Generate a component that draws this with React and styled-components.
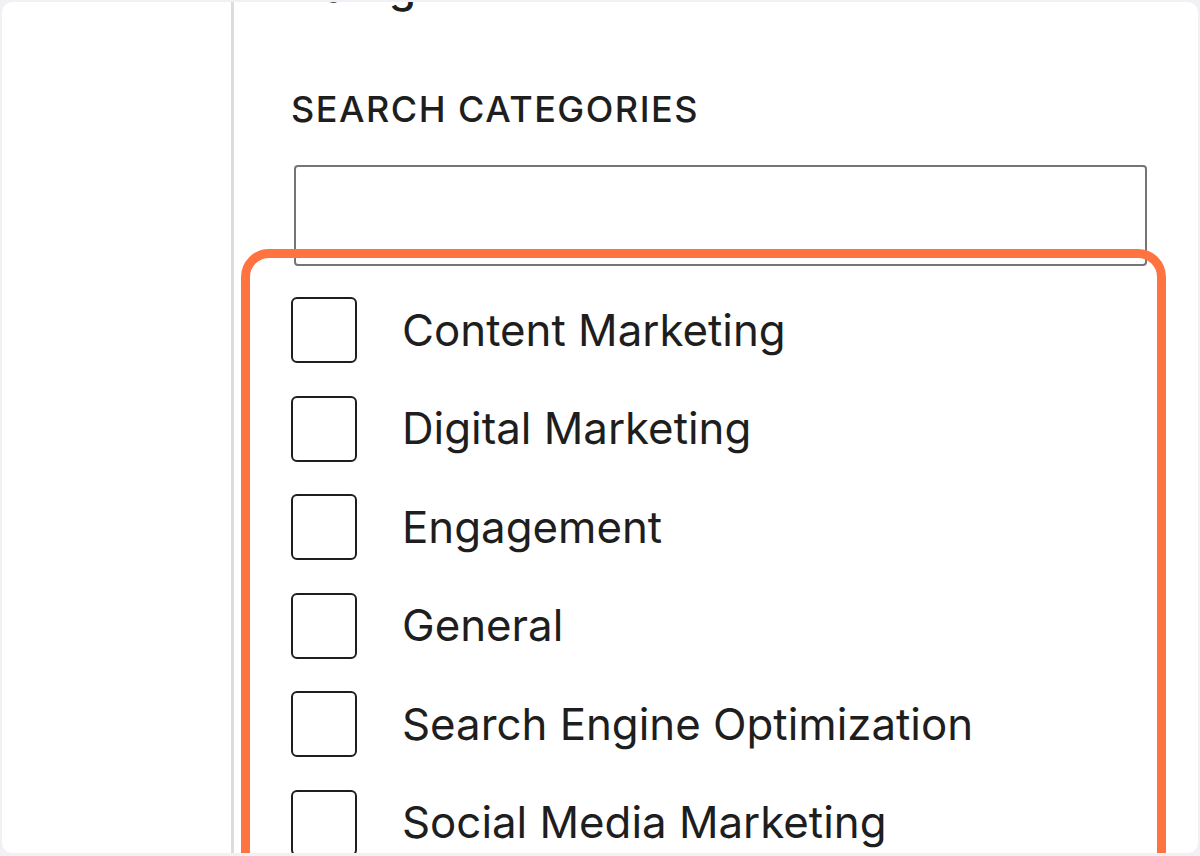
import React from "react";
import styled, { createGlobalStyle } from "styled-components";

const Global = createGlobalStyle`
  html, body { margin: 0; padding: 0; background: #f1f1f5; }
  body { font-family: Inter, "Noto Sans", sans-serif; color: #1e1e1e; }
  * { box-sizing: border-box; }
`;

const Card = styled.div`
  position: relative;
  margin: 2px;
  width: 1196px;
  height: 851px;
  background: #ffffff;
  border-radius: 10px;
  overflow: hidden;
  display: grid;
  grid-template-columns: 229px 3px 1fr;
`;

const Sidebar = styled.div``;

const Divider = styled.div`
  background: #dcdcde;
`;

const Main = styled.div`
  display: flex;
  flex-direction: column;
  padding-left: 57px;
  padding-right: 51px;
`;

const Heading = styled.h2`
  margin: -38px 0 0 0;
  font-size: 44px;
  line-height: 44px;
  font-weight: 500;
  color: #1e1e1e;
`;

const Label = styled.div`
  margin-top: 79px;
  font-size: 36px;
  line-height: 44px;
  font-weight: 500;
  letter-spacing: 1.5px;
  text-transform: uppercase;
  color: #1e1e1e;
`;

const SearchInput = styled.input`
  margin-top: 34px;
  margin-left: 3px;
  height: 101px;
  border: 2px solid #757575;
  border-radius: 4px;
  background: #fff;
  font-size: 40px;
  padding: 0 16px;
  outline: none;
`;

const List = styled.ul`
  list-style: none;
  margin: 31px 0 0 0;
  padding: 0;
  display: flex;
  flex-direction: column;
  gap: 32.6px;
`;

const Row = styled.li`
  display: flex;
  align-items: center;
  height: 66px;
  gap: 45px;
`;

const Box = styled.span`
  flex: none;
  width: 66px;
  height: 66px;
  border: 2px solid #1e1e1e;
  border-radius: 6px;
  background: #fff;
`;

const RowText = styled.span`
  font-size: 43.8px;
  font-weight: 400;
  color: #1e1e1e;
  white-space: nowrap;
`;

const Highlight = styled.div`
  position: absolute;
  left: 239px;
  top: 247px;
  width: 925px;
  height: 700px;
  border: 9px solid #ff7340;
  border-radius: 28px;
  pointer-events: none;
`;

const categories = [
  "Content Marketing",
  "Digital Marketing",
  "Engagement",
  "General",
  "Search Engine Optimization",
  "Social Media Marketing",
];

export default function App() {
  return (
    <>
      <Global />
      <Card>
        <Sidebar />
        <Divider />
        <Main>
          <Heading>Categories</Heading>
          <Label>Search Categories</Label>
          <SearchInput type="text" aria-label="Search categories" />
          <List>
            {categories.map((c) => (
              <Row key={c}>
                <Box />
                <RowText>{c}</RowText>
              </Row>
            ))}
          </List>
        </Main>
        <Highlight />
      </Card>
    </>
  );
}
